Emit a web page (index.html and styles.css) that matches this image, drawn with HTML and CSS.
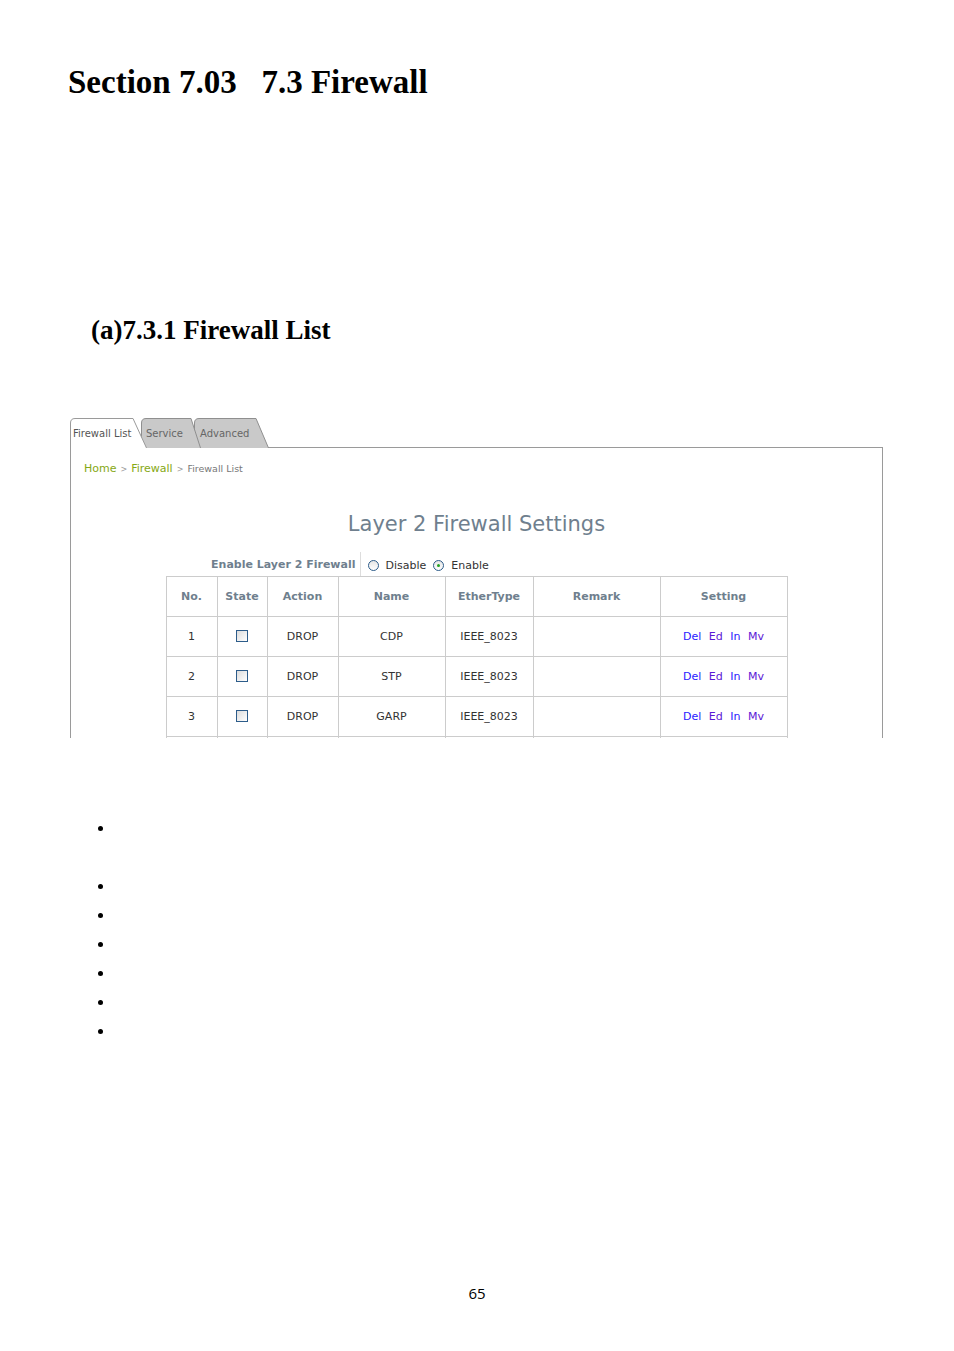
FILE: index.html
```html
<!DOCTYPE html>
<html lang="en">

<head>
    <meta charset="UTF-8">
    <title>Firewall</title>
    <link rel="stylesheet" href="styles.css">
</head>

<body>
    <div class="page">
        <h1 class="section-title">Section 7.03&nbsp;&nbsp;&nbsp;7.3 Firewall</h1>
        <h2 class="sub-title">(a)7.3.1 Firewall List</h2>

        <div class="shot">
            <div class="tabs">
                <div class="tab tab-active">
                    <svg viewBox="0 0 77 30" width="77" height="30"><path d="M0.5,30 V5 Q0.5,0.5 5,0.5 H63 L76.5,30" fill="#fff" stroke="#9a9a9a"/></svg>
                    <span>Firewall List</span>
                </div>
                <div class="tab tab-service">
                    <svg viewBox="0 0 60 30" width="60" height="30"><path d="M0.5,30 V5 Q0.5,0.5 5,0.5 H50 L59.5,30" fill="#c9c9c9" stroke="#8f8f8f"/></svg>
                    <span>Service</span>
                </div>
                <div class="tab tab-advanced">
                    <svg viewBox="0 0 75 30" width="75" height="30"><path d="M0.5,30 V5 Q0.5,0.5 5,0.5 H62 L74.5,30" fill="#c9c9c9" stroke="#8f8f8f"/></svg>
                    <span>Advanced</span>
                </div>
            </div>

            <div class="panel">
                <div class="crumbs">
                    <span class="crumb-link">Home</span>
                    <span class="crumb-sep">&gt;</span>
                    <span class="crumb-link">Firewall</span>
                    <span class="crumb-sep">&gt;</span>
                    <span class="crumb-here">Firewall List</span>
                </div>

                <div class="panel-title">Layer 2 Firewall Settings</div>

                <div class="enable-row">
                    <div class="enable-label">Enable Layer 2 Firewall</div>
                    <div class="enable-opts">
                        <span class="radio"></span>
                        <span>Disable</span>
                        <span class="radio radio-on"></span>
                        <span>Enable</span>
                    </div>
                </div>

                <table class="rules">
                    <colgroup>
                        <col class="c-no">
                        <col class="c-state">
                        <col class="c-action">
                        <col class="c-name">
                        <col class="c-type">
                        <col class="c-remark">
                        <col class="c-setting">
                    </colgroup>
                    <thead>
                        <tr>
                            <th>No.</th>
                            <th>State</th>
                            <th>Action</th>
                            <th>Name</th>
                            <th>EtherType</th>
                            <th>Remark</th>
                            <th>Setting</th>
                        </tr>
                    </thead>
                    <tbody>
                        <tr>
                            <td>1</td>
                            <td><span class="check"></span></td>
                            <td>DROP</td>
                            <td>CDP</td>
                            <td>IEEE_8023</td>
                            <td></td>
                            <td class="links"><a>Del</a> <a class="v">Ed</a> <a>In</a> <a class="v">Mv</a></td>
                        </tr>
                        <tr>
                            <td>2</td>
                            <td><span class="check"></span></td>
                            <td>DROP</td>
                            <td>STP</td>
                            <td>IEEE_8023</td>
                            <td></td>
                            <td class="links"><a>Del</a> <a class="v">Ed</a> <a>In</a> <a class="v">Mv</a></td>
                        </tr>
                        <tr>
                            <td>3</td>
                            <td><span class="check"></span></td>
                            <td>DROP</td>
                            <td>GARP</td>
                            <td>IEEE_8023</td>
                            <td></td>
                            <td class="links"><a>Del</a> <a class="v">Ed</a> <a>In</a> <a class="v">Mv</a></td>
                        </tr>
                        <tr>
                            <td></td>
                            <td></td>
                            <td></td>
                            <td></td>
                            <td></td>
                            <td></td>
                            <td></td>
                        </tr>
                    </tbody>
                </table>
            </div>
        </div>

        <ul class="bullets first">
            <li>&nbsp;</li>
        </ul>
        <ul class="bullets">
            <li>&nbsp;</li>
            <li>&nbsp;</li>
            <li>&nbsp;</li>
            <li>&nbsp;</li>
            <li>&nbsp;</li>
            <li>&nbsp;</li>
        </ul>

        <div class="page-no">65</div>
    </div>
</body>

</html>
```

FILE: styles.css
```css
body {
    margin: 0;
    background-color: #ffffff;
    color: #000000;
}

.page {
    width: 954px;
    height: 1351px;
    position: relative;
    overflow: hidden;
}

.section-title {
    font-family: "Liberation Serif", "DejaVu Serif", serif;
    font-weight: bold;
    font-size: 33px;
    line-height: 36px;
    margin: 64px 0 0 68px;
}

.sub-title {
    font-family: "Liberation Serif", "DejaVu Serif", serif;
    font-weight: bold;
    font-size: 27px;
    line-height: 30px;
    margin: 215px 0 0 91px;
}

/* screenshot of the router page */
.shot {
    margin: 73px 0 0 70px;
    font-family: "DejaVu Sans", Verdana, sans-serif;
}

.tabs {
    display: flex;
    align-items: flex-end;
    position: relative;
    z-index: 1;
    margin-bottom: -1px;
    height: 30px;
}

.tab {
    position: relative;
    height: 30px;
    font-size: 10px;
    color: #666666;
}

.tab svg {
    position: absolute;
    left: 0;
    top: 0;
    display: block;
}

.tab span {
    position: relative;
    display: block;
    line-height: 30px;
    padding-top: 1px;
}

.tab-active {
    width: 77px;
    z-index: 3;
}

.tab-active span {
    padding-left: 3px;
    color: #555555;
}

.tab-service {
    width: 60px;
    margin-left: -6px;
    z-index: 2;
}

.tab-service span {
    padding-left: 5px;
}

.tab-advanced {
    width: 75px;
    margin-left: -7px;
    z-index: 1;
}

.tab-advanced span {
    padding-left: 6px;
}

.panel {
    width: 811px;
    height: 290px;
    border: 1px solid #9a9a9a;
    border-bottom: none;
    overflow: hidden;
}

.crumbs {
    padding: 13px 0 0 13px;
    font-size: 11px;
    line-height: 16px;
    display: flex;
    align-items: baseline;
    gap: 4px;
}

.crumb-link {
    color: #86a814;
}

.crumb-sep {
    color: #999999;
    font-size: 8px;
}

.crumb-here {
    color: #777777;
    font-size: 9.5px;
}

.panel-title {
    text-align: center;
    font-size: 21px;
    line-height: 28px;
    color: #6f7f8e;
    margin-top: 32px;
}

.enable-row {
    display: flex;
    width: 620px;
    margin: 14px auto 0;
    font-size: 11px;
    height: 24px;
    align-items: stretch;
}

.enable-label {
    width: 189px;
    padding-right: 4px;
    text-align: right;
    font-weight: bold;
    color: #6f7f8e;
    border-right: 1px solid #dddddd;
    line-height: 26px;
}

.enable-opts {
    display: flex;
    align-items: center;
    padding-top: 2px;
    padding-left: 7px;
    color: #333333;
}

.radio {
    width: 9px;
    height: 9px;
    border: 1px solid #2d5c8a;
    border-radius: 50%;
    background: linear-gradient(#e6e6e6, #ffffff);
    margin-right: 7px;
    position: relative;
}

.radio-on {
    margin-left: 7px;
}

.radio-on::after {
    content: "";
    position: absolute;
    left: 3px;
    top: 3px;
    width: 3px;
    height: 3px;
    border-radius: 50%;
    background-color: #22a022;
}

.rules {
    width: 621px;
    margin: 0 auto;
    border-collapse: collapse;
    table-layout: fixed;
    font-size: 11px;
}

.rules th,
.rules td {
    border: 1px solid #cccccc;
    height: 39px;
    padding: 0;
    text-align: center;
    color: #333333;
}

.rules th {
    color: #6f7f8e;
    font-weight: bold;
}

.c-no { width: 51px; }
.c-state { width: 50px; }
.c-action { width: 71px; }
.c-name { width: 107px; }
.c-type { width: 88px; }
.c-remark { width: 127px; }
.c-setting { width: 127px; }

.check {
    display: inline-block;
    width: 10px;
    height: 10px;
    border: 1px solid #2d5c8a;
    background: linear-gradient(135deg, #dcdcdc, #ffffff);
    vertical-align: -1px;
}

.links {
    word-spacing: 4px;
}

.links a {
    color: #2a1aff;
}

.links a.v {
    color: #5b18d6;
}

.bullets {
    margin: 0;
    padding-left: 100px;
    list-style: none;
}

.bullets li {
    height: 29px;
    position: relative;
}

.bullets li::before {
    content: "";
    position: absolute;
    left: -2px;
    top: 12px;
    width: 5px;
    height: 5px;
    border-radius: 50%;
    background-color: #000000;
}

.bullets.first {
    margin-top: 76px;
    margin-bottom: 29px;
}

.page-no {
    margin-top: 237px;
    text-align: center;
    font-family: "Open Sans", "Liberation Sans", sans-serif;
    font-size: 15px;
    line-height: 20px;
}
```
